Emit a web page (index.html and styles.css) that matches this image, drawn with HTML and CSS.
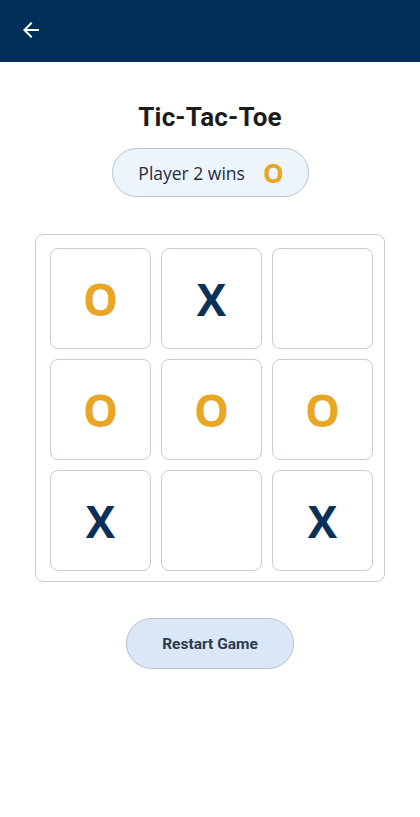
FILE: index.html
```html
<!DOCTYPE html>
<html>
<head>
<meta charset="utf-8">
<link rel="stylesheet" href="styles.css">
</head>
<body>
<header class="appbar">
  <button class="back" aria-label="Back">
    <svg viewBox="0 0 24 24" width="24" height="24"><path d="M20 11H7.83l5.59-5.59L12 4l-8 8 8 8 1.41-1.41L7.83 13H20v-2z" fill="#fff"/></svg>
  </button>
</header>
<main class="content">
  <h1 class="title">Tic-Tac-Toe</h1>
  <div class="status"><span class="status-text">Player 2 wins</span><span class="status-mark">O</span></div>
  <div class="board">
    <div class="cell o">O</div>
    <div class="cell x">X</div>
    <div class="cell"></div>
    <div class="cell o">O</div>
    <div class="cell o">O</div>
    <div class="cell o">O</div>
    <div class="cell x">X</div>
    <div class="cell"></div>
    <div class="cell x">X</div>
  </div>
  <button class="restart">Restart Game</button>
</main>
</body>
</html>
```
FILE: styles.css
```css
html, body { margin: 0; padding: 0; background: #fff; }
body { font-family: Roboto, "Noto Sans", sans-serif; width: 420px; }
.appbar {
  height: 62px;
  background: #003058;
  display: flex;
  align-items: center;
  padding-left: 19px;
}
.back {
  background: none; border: 0; padding: 0; width: 24px; height: 24px;
  display: flex; margin-top: -2px;
}
.content {
  display: flex;
  flex-direction: column;
  align-items: center;
}
.title {
  margin: 38px 0 0;
  font-size: 26px;
  font-weight: 700;
  color: #1c1c1c;
  line-height: 35px;
  letter-spacing: 0.2px;
}
.status {
  margin-top: 13px;
  width: 197px;
  height: 49px;
  box-sizing: border-box;
  border: 1px solid #b9c3cd;
  border-radius: 25px;
  background: #eef4fb;
  display: flex;
  align-items: center;
  justify-content: center;
  gap: 18px;
  padding-left: 2px;
}
.status-text {
  font-family: "Open Sans", sans-serif;
  font-size: 17.5px;
  color: #1e2d3d;
}
.status-mark {
  font-family: "Open Sans", sans-serif;
  font-weight: 700;
  font-size: 26px;
  color: #e8a624;
}
.board {
  margin-top: 37px;
  width: 350px;
  box-sizing: border-box;
  border: 1px solid #c9ced3;
  border-radius: 8px;
  padding: 13px 11px 10px 14px;
  display: grid;
  grid-template-columns: repeat(3, 101px);
  grid-template-rows: repeat(3, 101px);
  gap: 10px;
}
.cell {
  box-sizing: border-box;
  border: 1px solid #c9ced3;
  border-radius: 8px;
  display: flex;
  align-items: center;
  justify-content: center;
  font-family: "Open Sans", sans-serif;
  font-weight: 700;
  font-size: 44px;
}
.cell.x { color: #0c3158; }
.cell.o { color: #e8a624; }
.restart {
  margin-top: 36px;
  width: 168px;
  height: 51px;
  border: 1px solid #b6c2ce;
  border-radius: 26px;
  background: #d9e7f7;
  font-family: Roboto, sans-serif;
  font-weight: 700;
  font-size: 15.5px;
  color: #2b3b4d;
  padding: 0;
}
```
